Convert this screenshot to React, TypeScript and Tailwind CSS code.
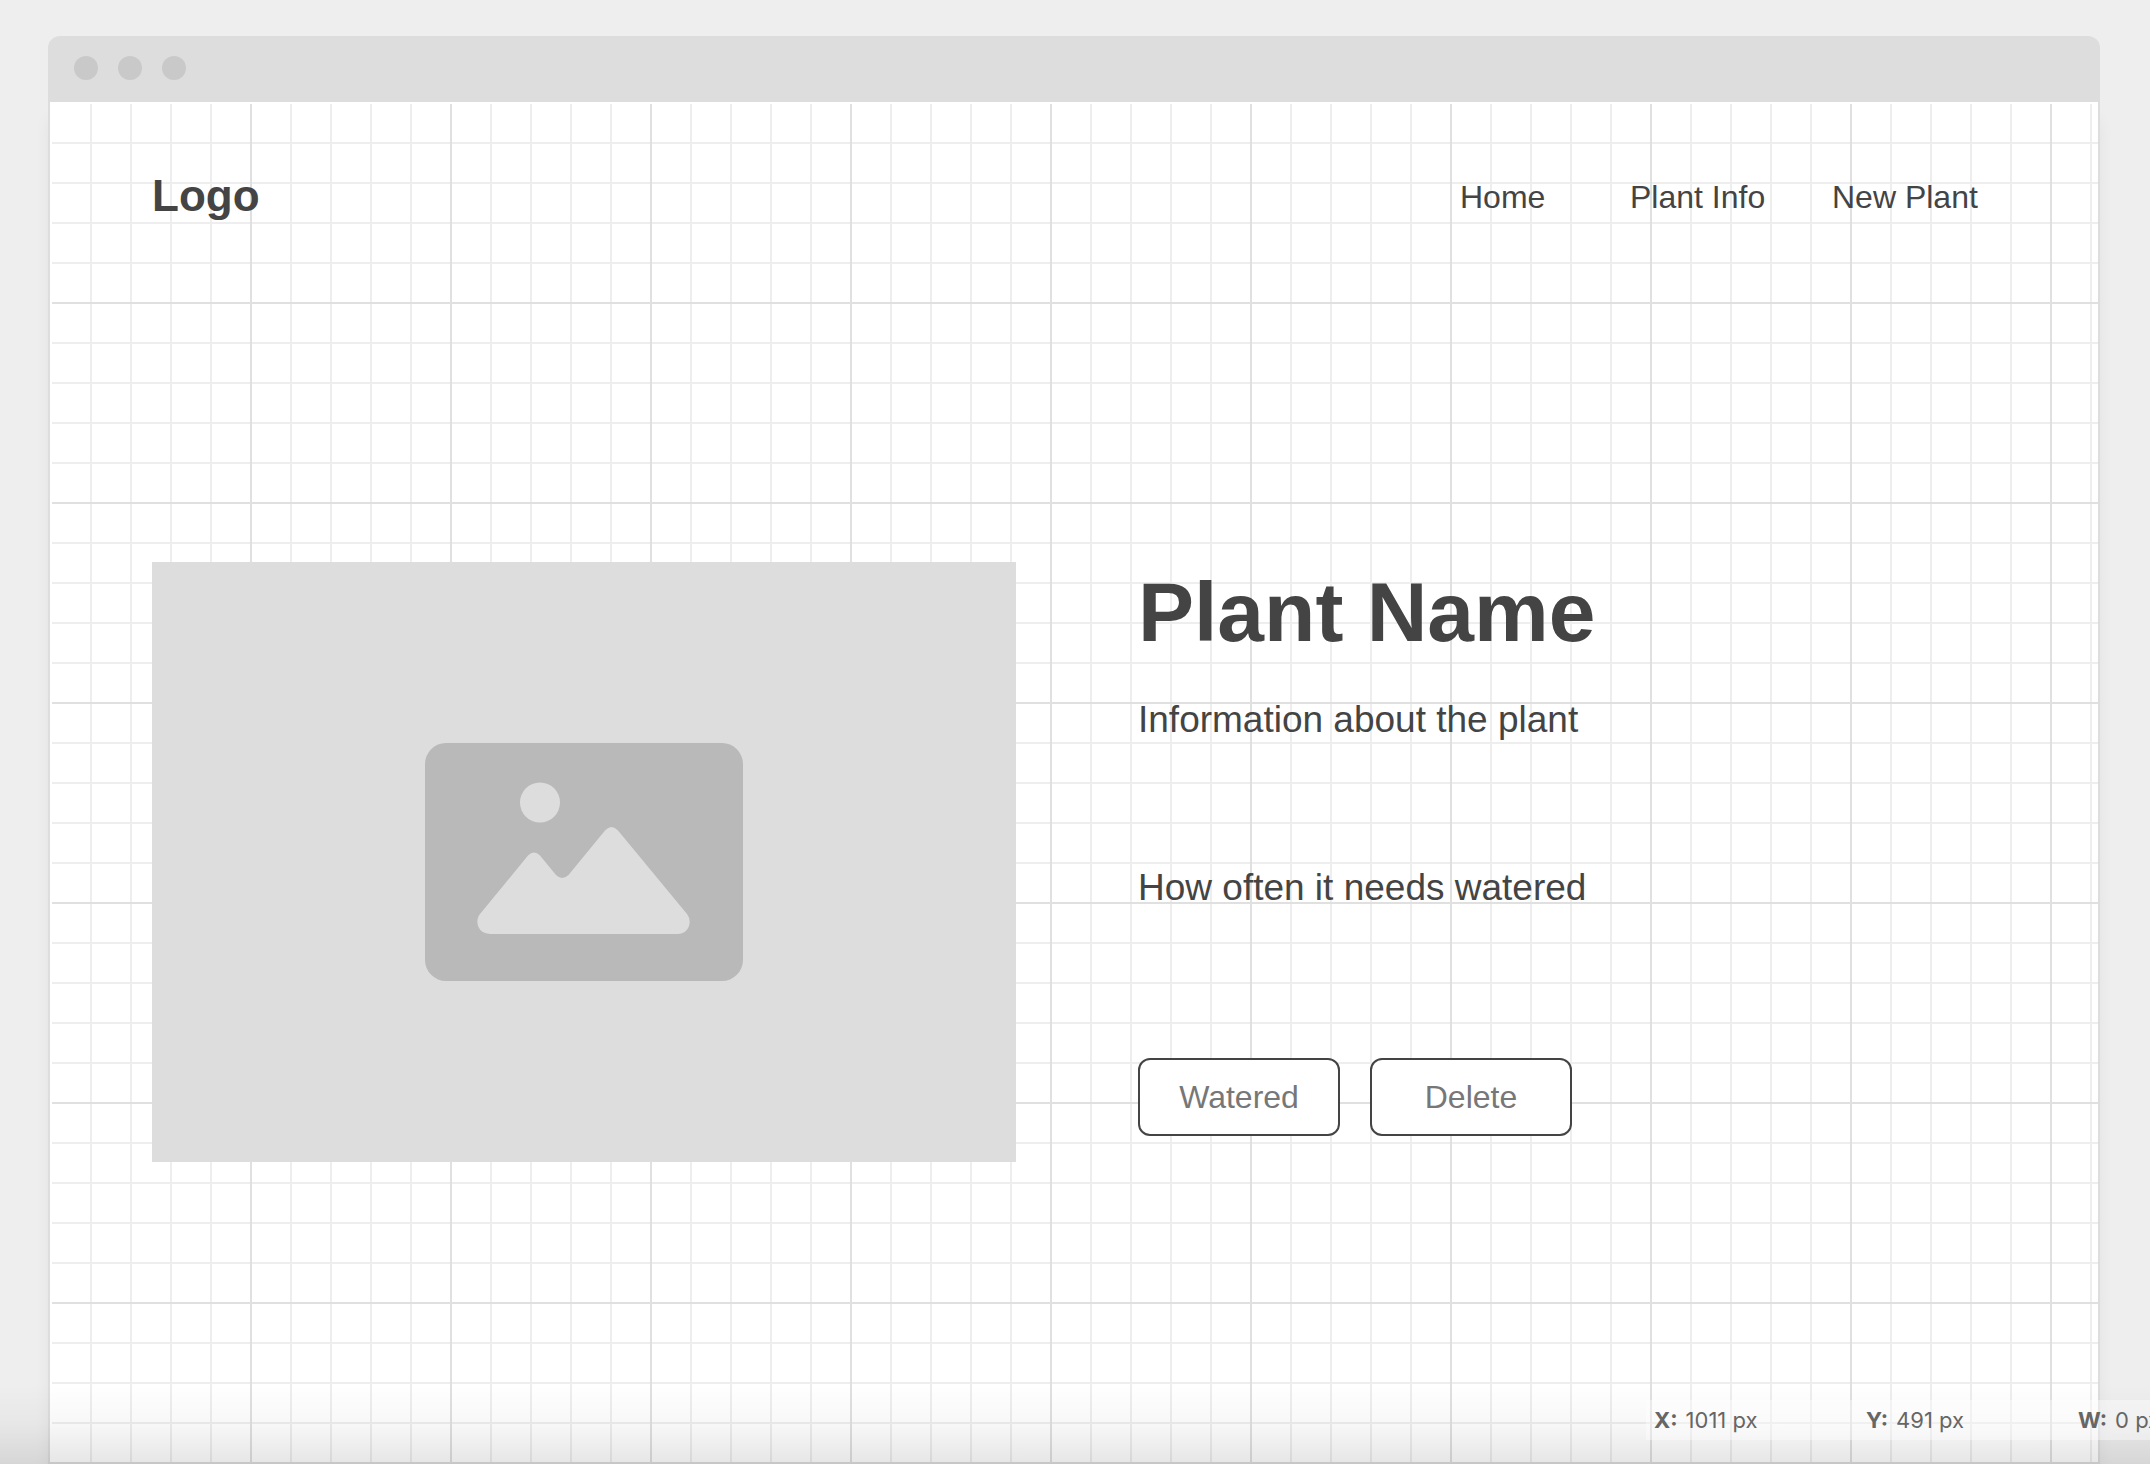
const navLinks = [
  { label: "Home", width: "w-[170px]" },
  { label: "Plant Info", width: "w-[202px]" },
  { label: "New Plant", width: "w-[150px]" },
];

const readouts = [
  { label: "X:", value: "1011 px" },
  { label: "Y:", value: "491 px" },
  { label: "W:", value: "0 px" },
];

function TitleBar() {
  return (
    <div className="flex h-[66px] shrink-0 items-center gap-5 rounded-t-[12px] bg-[#dddddd] px-[26px] pb-0.5">
      <span className="size-6 rounded-full bg-[#c9c9c9]" />
      <span className="size-6 rounded-full bg-[#c9c9c9]" />
      <span className="size-6 rounded-full bg-[#c9c9c9]" />
    </div>
  );
}

function ImagePlaceholder() {
  return (
    <div className="flex h-[600px] w-[864px] shrink-0 items-center justify-center bg-[#dddddd]">
      <svg viewBox="0 0 318 238" className="h-[238px] w-[318px]" role="img" aria-label="Image placeholder">
        <rect width="318" height="238" rx="21" fill="#b9b9b9" />
        <circle cx="115" cy="59.500" r="20" fill="#dddddd" />
        <path
          fill="#dddddd"
          d="M55 171 L103 112.500 Q109 106.500 115 112.500 L131 132 Q137 138 143.500 132 L180 87.500 Q186.500 80.500 193 87.500 L262 171 C268 179 263.500 191 252.500 191 H65 C53.500 191 49 179 55 171 Z"
        />
      </svg>
    </div>
  );
}

function Readouts() {
  return (
    <dl className="absolute bottom-6 left-[1646px] flex h-10 font-[Inter,sans-serif] text-[22px] leading-10 text-[#666666]">
      {readouts.map((r) => (
        <div key={r.label} className="flex w-[212px] gap-2 bg-white/40 pl-2 whitespace-nowrap">
          <dt className="font-bold">{r.label}</dt>
          <dd>{r.value}</dd>
        </div>
      ))}
    </dl>
  );
}

export default function App() {
  return (
    <div className="relative flex h-screen flex-col overflow-hidden bg-[#eeeeee] pt-9 pr-[50px] pl-12 font-['Liberation_Sans',Arial,sans-serif] text-[#444444]">
      <div className="flex grow flex-col rounded-t-[12px] shadow-[0_80px_16px_rgba(0,0,0,0.05)]">
        <TitleBar />
        <div className="flex grow flex-col border-x-2 border-b-2 border-[#dddddd] bg-white pt-0.5 pl-0.5">
          <div className="grow bg-[linear-gradient(to_right,transparent_198px,#e0e0e0_198px),linear-gradient(to_bottom,transparent_198px,#e0e0e0_198px),linear-gradient(to_right,transparent_38px,#eeeeee_38px),linear-gradient(to_bottom,transparent_38px,#eeeeee_38px)] bg-size-[200px_200px,200px_200px,40px_40px,40px_40px] px-[100px] pt-[68px]">
            <header className="flex h-12 items-center justify-between">
              <a href="#logo" className="text-[44px] leading-12 font-bold">Logo</a>
              <nav className="flex pt-0.5 pr-4 text-[32px] leading-12">
                {navLinks.map((l) => (
                  <a key={l.label} href="#nav" className={l.width}>{l.label}</a>
                ))}
              </nav>
            </header>
            <main className="mt-[342px] flex gap-[122px]">
              <ImagePlaceholder />
              <section className="flex flex-col items-start">
                <h1 className="text-[84px] leading-[100px] font-bold">Plant Name</h1>
                <p className="mt-[34px] text-[37px] leading-12">Information about the plant</p>
                <p className="mt-30 text-[37px] leading-12">How often it needs watered</p>
                <div className="mt-[146px] flex gap-[30px] text-[32px] text-[#777777]">
                  <button type="button" className="h-[78px] w-[202px] rounded-[12px] border-2 border-[#444444] bg-white">Watered</button>
                  <button type="button" className="h-[78px] w-[202px] rounded-[12px] border-2 border-[#444444] bg-white">Delete</button>
                </div>
              </section>
            </main>
          </div>
        </div>
      </div>
      <div className="pointer-events-none absolute inset-x-0 bottom-0 h-20 bg-linear-to-b from-black/0 via-black/3 to-black/10" />
      <Readouts />
    </div>
  );
}
